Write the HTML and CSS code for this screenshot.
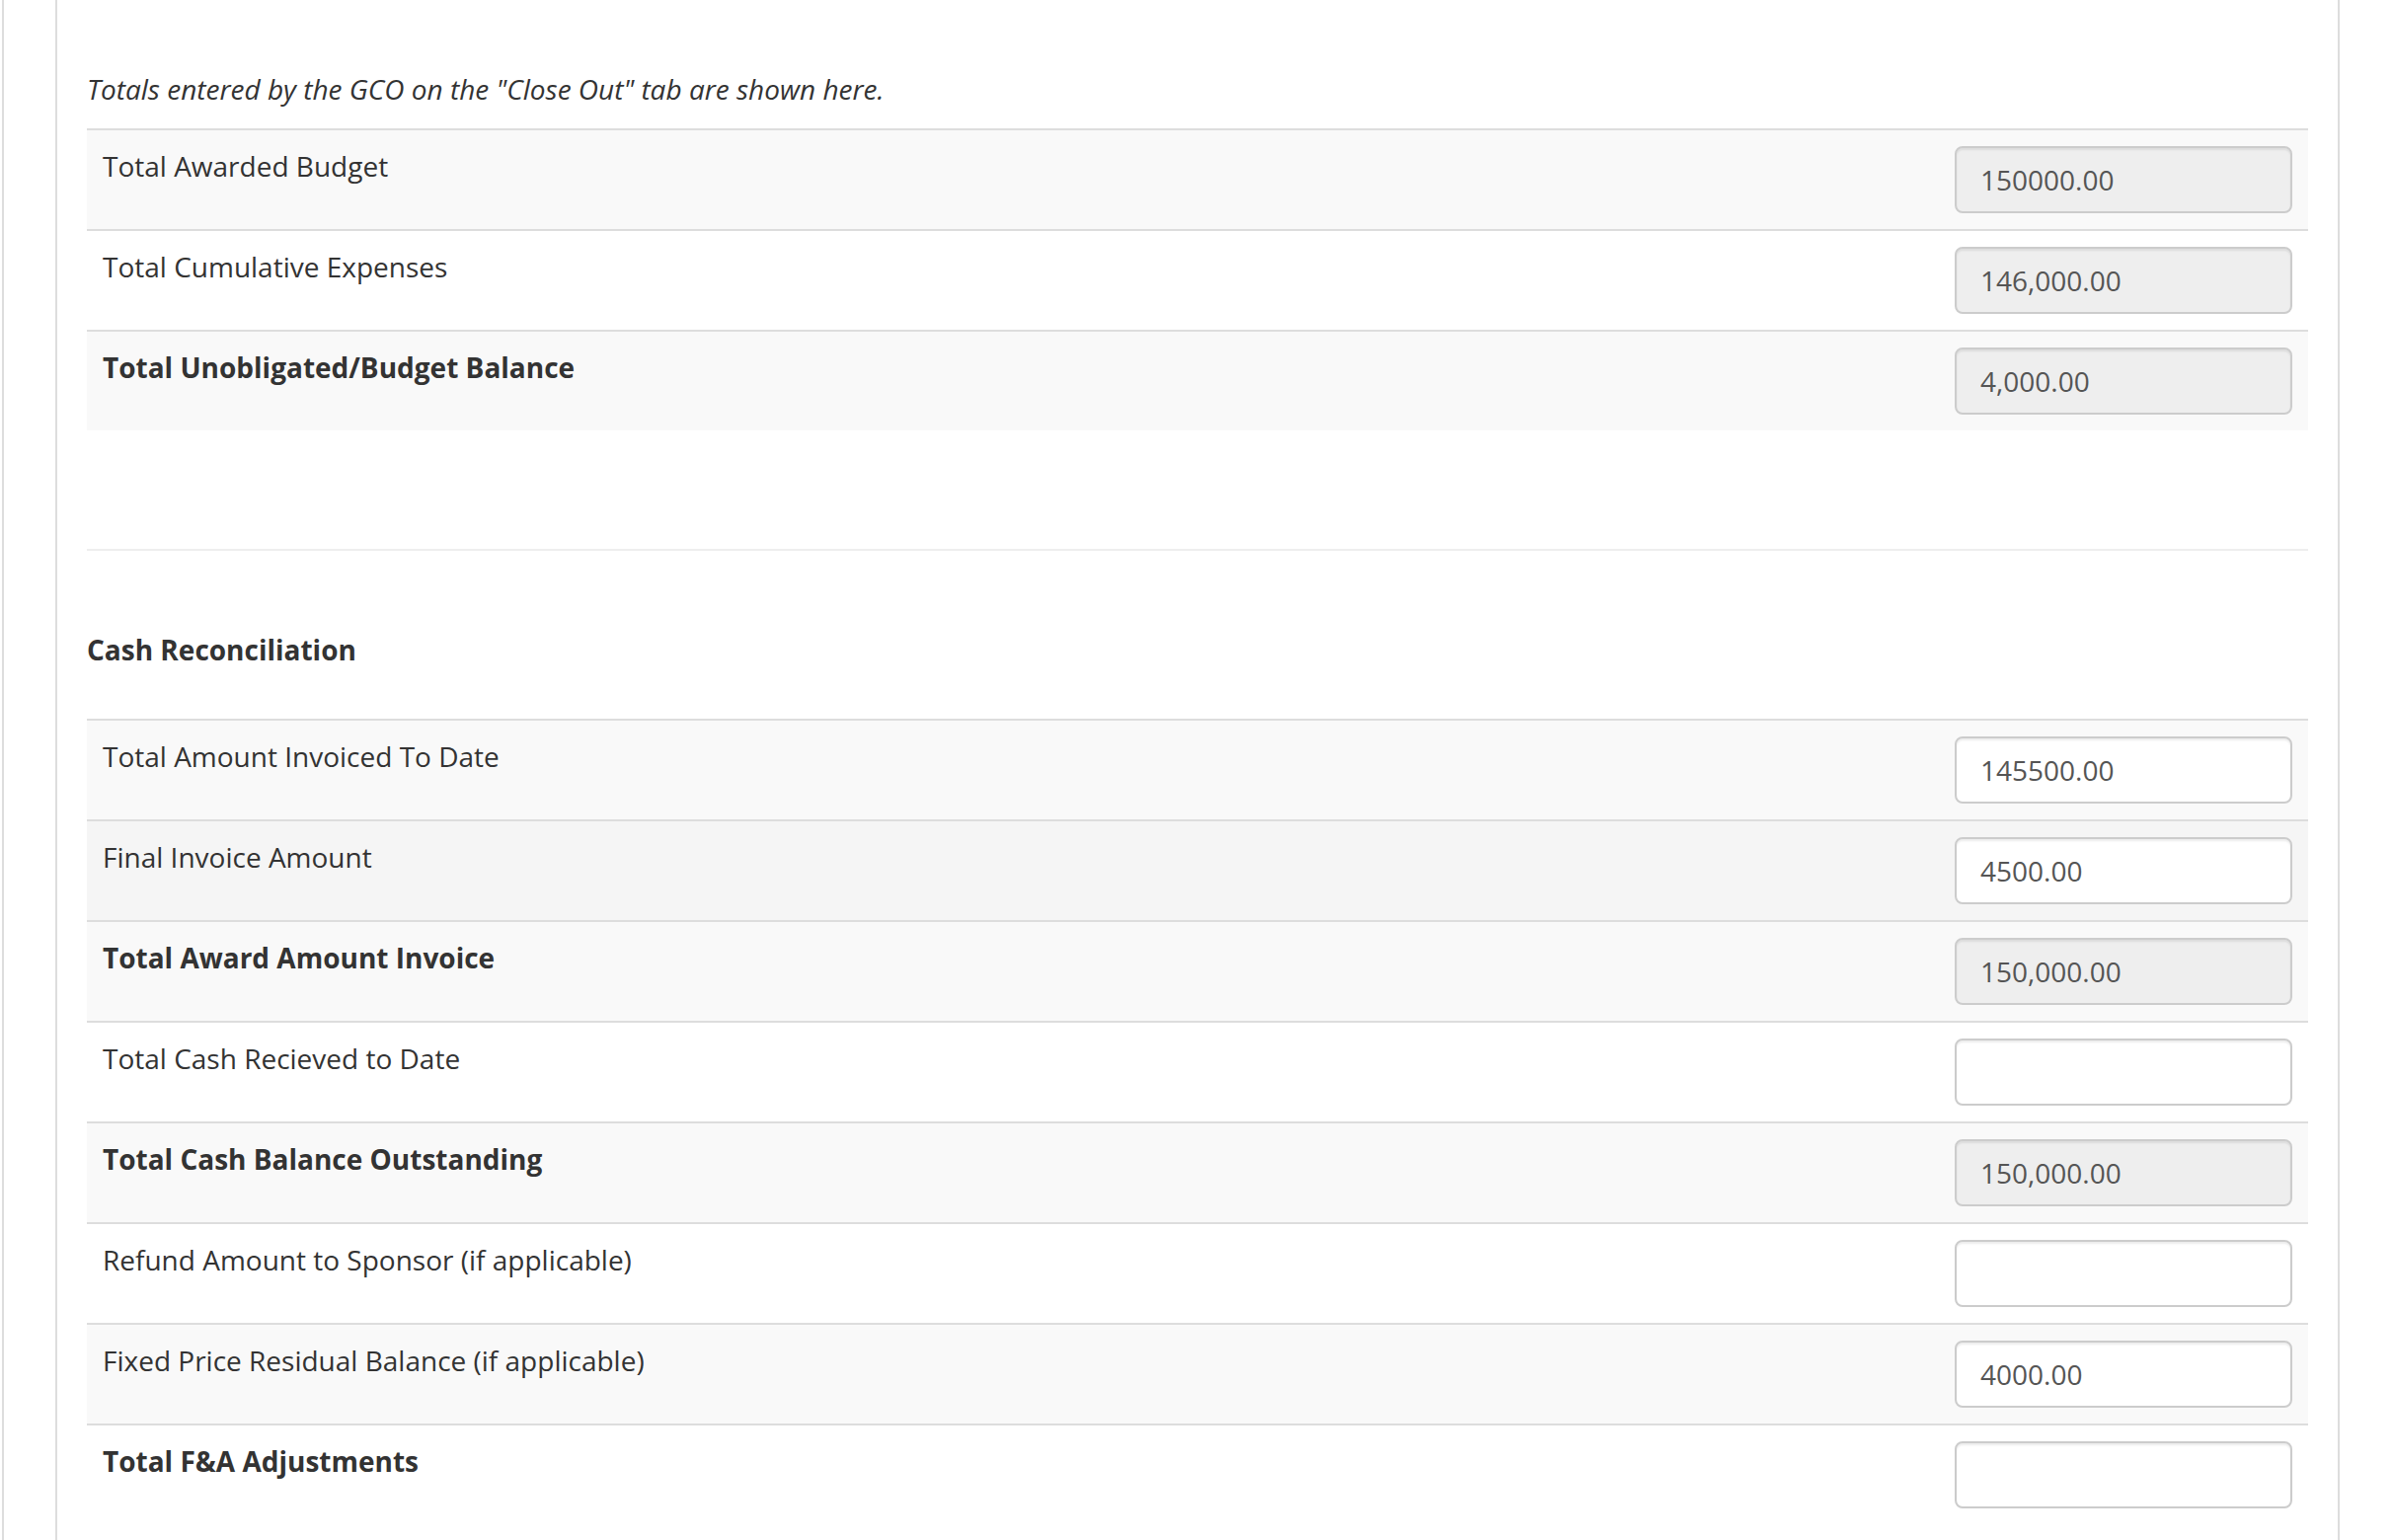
FILE: index.html
```html
<!DOCTYPE html>
<html lang="en">
	<head>
		<meta charset="UTF-8">
		<meta name="viewport" content="width=device-width, initial-scale=1">
		<title>Close Out - Financial Reconciliation</title>
		<link rel="stylesheet" href="styles.css">
	</head>
	<body>
		<div class="frame">
			<div class="panel">

				<p class="help-text">Totals entered by the GCO on the "Close Out" tab are shown here.</p>

				<table class="recon-table summary">
					<tr>
						<td>Total Awarded Budget</td>
						<td class="field"><input value="150000.00" readonly></td>
					</tr>
					<tr>
						<td>Total Cumulative Expenses</td>
						<td class="field"><input value="146,000.00" readonly></td>
					</tr>
					<tr>
						<td class="total">Total Unobligated/Budget Balance</td>
						<td class="field"><input value="4,000.00" readonly></td>
					</tr>
				</table>

				<hr class="divider">

				<h4 class="section-title">Cash Reconciliation</h4>

				<table class="recon-table">
					<tr>
						<td>Total Amount Invoiced To Date</td>
						<td class="field"><input name="invoiced_to_date" value="145500.00"></td>
					</tr>
					<tr class="hover">
						<td>Final Invoice Amount</td>
						<td class="field"><input name="final_invoice" value="4500.00"></td>
					</tr>
					<tr>
						<td class="total">Total Award Amount Invoice</td>
						<td class="field"><input value="150,000.00" readonly></td>
					</tr>
					<tr>
						<td>Total Cash Recieved to Date</td>
						<td class="field"><input name="cash_received"></td>
					</tr>
					<tr>
						<td class="total">Total Cash Balance Outstanding</td>
						<td class="field"><input value="150,000.00" readonly></td>
					</tr>
					<tr>
						<td>Refund Amount to Sponsor (if applicable)</td>
						<td class="field"><input name="refund_amount"></td>
					</tr>
					<tr>
						<td>Fixed Price Residual Balance (if applicable)</td>
						<td class="field"><input name="residual_balance" value="4000.00"></td>
					</tr>
					<tr>
						<td class="total">Total F&amp;A Adjustments</td>
						<td class="field"><input name="fa_adjustments"></td>
					</tr>
				</table>

			</div>
		</div>
	</body>
</html>
```

FILE: styles.css
```css
* {
	box-sizing: border-box;
}
body {
	margin: 0;
	font-family: "Open Sans", "Noto Sans", "Liberation Sans", sans-serif;
	font-size: 28px;
	line-height: 40px;
	color: #333;
	background: #fff;
}

.frame {
	margin-left: 2px;
	border-left: 2px solid #ddd;
	padding-left: 52px;
	min-height: 100vh;
}
.panel {
	width: 2314px;
	min-height: 100vh;
	border-left: 2px solid #ddd;
	border-right: 2px solid #ddd;
	padding: 70px 30px 0;
}

.help-text {
	font-style: italic;
	margin: 0 0 20px;
}

.recon-table {
	width: 100%;
	border-collapse: collapse;
	border-spacing: 0;
}
.recon-table td {
	padding: 16px;
	vertical-align: top;
	border-top: 2px solid #ddd;
}
.recon-table tr:nth-child(odd) {
	background: #f9f9f9;
}
.recon-table tr.hover {
	background: #f5f5f5;
}
.recon-table .total {
	font-weight: bold;
}
/* 342px input + 16px padding each side */
.recon-table .field {
	width: 374px;
}
.recon-table input {
	display: block;
	width: 100%;
	height: 68px;
	padding: 12px 24px;
	font: inherit;
	color: #555;
	background: #fff;
	border: 2px solid #ccc;
	border-radius: 8px;
	box-shadow: inset 0 2px 2px rgba(0, 0, 0, .075);
	outline: none;
}
.recon-table input[readonly] {
	background: #eee;
}

.divider {
	margin: 120px 0 0;
	border: 0;
	border-top: 2px solid #eee;
}
.section-title {
	font-size: 28px;
	line-height: 40px;
	font-weight: bold;
	margin: 80px 0 50px;
}
```
